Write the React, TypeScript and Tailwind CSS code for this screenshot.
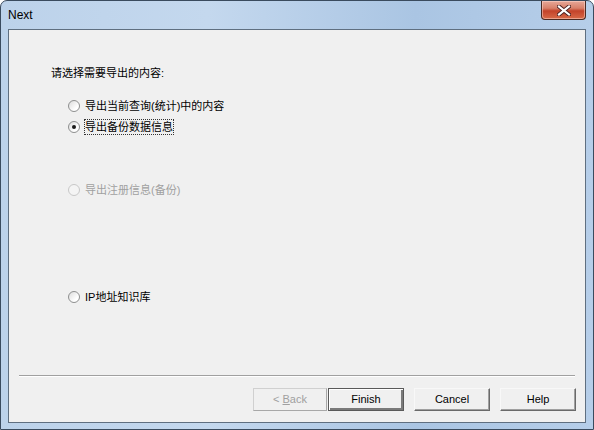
import React from "react";

const cjk = { fontFamily: '"Liberation Sans", "Noto Sans CJK SC", sans-serif' };

function Radio({ checked, disabled }: { checked?: boolean; disabled?: boolean }) {
  return (
    <span
      className={
        "relative inline-flex h-[12px] w-[12px] shrink-0 items-center justify-center rounded-full border " +
        (disabled
          ? "border-[#c8c8c8] bg-[#f4f4f4]"
          : "border-[#8e8f8f] bg-[linear-gradient(135deg,#dcdcdc,#ffffff_70%)]")
      }
    >
      {checked && <span className="h-[4px] w-[4px] rounded-full bg-[#1a1a1a]" />}
    </span>
  );
}

function Option({
  label,
  checked,
  disabled,
  focus,
}: {
  label: string;
  checked?: boolean;
  disabled?: boolean;
  focus?: boolean;
}) {
  return (
    <div className="flex h-[16px] items-center pl-[59px]">
      <Radio checked={checked} disabled={disabled} />
      <span
        className={
          "ml-[5px] text-[11px] leading-[14px] " +
          (disabled ? "text-[#a0a0a0]" : "text-black") +
          (focus ? " outline-1 outline-dotted outline-[#333]" : "")
        }
        style={cjk}
      >
        {label}
      </span>
    </div>
  );
}

function Btn({
  label,
  w,
  disabled,
  isDefault,
  underline,
}: {
  label: string;
  w: string;
  disabled?: boolean;
  isDefault?: boolean;
  underline?: string;
}) {
  const base = "flex h-[23px] items-center justify-center text-[11px] " + w;
  if (disabled) {
    return (
      <div
        className={base + " border border-[#d0d0d0] border-b-[#a8a8a8] border-r-[#a8a8a8] bg-[#f0f0f0] text-[#a0a0a0]"}
        style={cjk}
      >
        <span>
          {"< "}
          <span className="underline">{underline}</span>
          {label}
        </span>
      </div>
    );
  }
  return (
    <div
      className={
        base +
        (isDefault
          ? " border border-[#5a5a5a] shadow-[inset_1px_1px_0_#ffffff,inset_-2px_-2px_0_#7a7a7a]"
          : " border border-[#f8f8f8] border-b-[#6a6a6a] border-r-[#6a6a6a] shadow-[inset_-1px_-1px_0_#a0a0a0]") +
        " bg-[#f0f0f0] text-black"
      }
      style={cjk}
    >
      {label}
    </div>
  );
}

export default function App() {
  return (
    <div className="h-[430px] w-[594px] overflow-hidden bg-white">
      <div className="flex h-[430px] w-[594px] flex-col rounded-t-[7px] border border-[#3a4b5e] bg-[linear-gradient(90deg,#bcd2ea_0%,#c4d8ee_35%,#aac5e3_70%,#b6cee9_100%)]">
        {/* title bar */}
        <div className="flex h-[28px] items-start justify-between">
          <div className="pl-[7px] pt-[7px] text-[12px] leading-[14px] text-black" style={cjk}>
            Next
          </div>
          <div className="mr-[7px] flex h-[19px] w-[45px] items-center justify-center rounded-b-[4px] border border-t-0 border-[#4a2a22] bg-[linear-gradient(180deg,#e7a898_0%,#d8806a_40%,#c3432a_55%,#d86a48_100%)] shadow-[inset_0_0_0_1px_rgba(255,220,210,0.5)]">
            <svg width="14" height="11" viewBox="0 0 14 11">
              <path
                d="M2 1.5 L12 9.5 M12 1.5 L2 9.5"
                stroke="#4a2020"
                strokeWidth="4"
                strokeLinecap="square"
              />
              <path d="M2 1.5 L12 9.5 M12 1.5 L2 9.5" stroke="#ffffff" strokeWidth="2.2" strokeLinecap="square" />
            </svg>
          </div>
        </div>
        {/* client area */}
        <div className="mx-[7px] flex h-[394px] flex-col border border-[#5f6f80] bg-[#f0f0f0]">
          <div className="ml-[42px] mt-[36px] h-[14px] text-[11px] leading-[14px] text-black" style={cjk}>
            请选择需要导出的内容:
          </div>
          <div className="mt-[18px]">
            <Option label="导出当前查询(统计)中的内容" />
          </div>
          <div className="mt-[5px]">
            <Option label="导出备份数据信息" checked focus />
          </div>
          <div className="mt-[47px]">
            <Option label="导出注册信息(备份)" disabled />
          </div>
          <div className="mt-[91px]">
            <Option label="IP地址知识库" />
          </div>
          <div className="mx-[10px] mt-[70px] h-[2px] border-t border-b border-t-[#a0a0a0] border-b-white" />
          <div className="mt-[11px] flex justify-end pr-[9px]">
            <Btn label="ack" underline="B" w="w-[74px]" disabled />
            <div className="ml-[1px]">
              <Btn label="Finish" w="w-[76px]" isDefault />
            </div>
            <div className="ml-[10px]">
              <Btn label="Cancel" w="w-[76px]" />
            </div>
            <div className="ml-[10px]">
              <Btn label="Help" w="w-[76px]" />
            </div>
          </div>
        </div>
      </div>
    </div>
  );
}
